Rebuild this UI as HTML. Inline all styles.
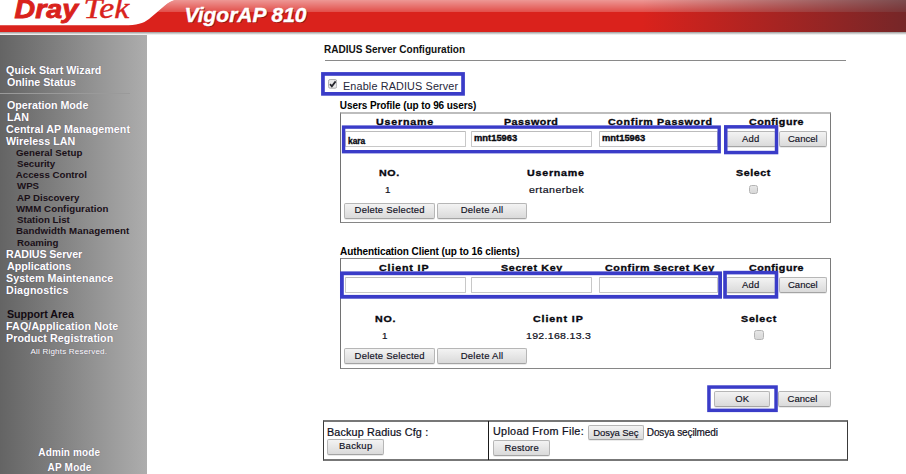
<!DOCTYPE html>
<html>
<head>
<meta charset="utf-8">
<title>Vigor AP 810</title>
<style>
*{margin:0;padding:0;box-sizing:border-box;}
html,body{width:906px;height:474px;overflow:hidden;background:#fff;}
body{position:relative;font-family:"Liberation Sans",sans-serif;font-size:11px;color:#000;}
.abs{position:absolute;white-space:nowrap;line-height:1;}
/* header */
#hdr{position:absolute;left:0;top:0;width:906px;height:36px;}
/* sidebar */
#side{position:absolute;left:0;top:35px;width:147px;height:439px;background:linear-gradient(to right,#646464 0%,#7d7d7d 35%,#9b9b9b 75%,#adadad 100%);}
.m{position:absolute;left:7px;white-space:nowrap;line-height:12px;font-weight:bold;font-size:10.7px;color:#fff;text-shadow:0 0 1px rgba(60,40,90,.55);}
.s{position:absolute;left:17px;white-space:nowrap;line-height:11px;font-weight:bold;font-size:9.7px;color:#1a1018;}
/* content */
.t{position:absolute;white-space:nowrap;line-height:12px;font-size:11px;color:#000;}
.vb{position:absolute;white-space:nowrap;line-height:12px;font-size:9.8px;font-weight:bold;color:#08080f;-webkit-text-stroke:.35px #08080f;}
.v{position:absolute;white-space:nowrap;line-height:12px;font-size:9.8px;color:#0e0e20;-webkit-text-stroke:.2px #0e0e20;}
.box{position:absolute;border:1px solid #868686;border-left-color:#727272;border-right-color:#7a7a7a;background:#fff;}
.blue{position:absolute;border:4px solid #3a3cc6;}
.inp{position:absolute;height:16px;border:1px solid #c8c8c8;border-top-color:#bcbcbc;border-radius:1px;background:#fff;}
.btn{position:absolute;height:16px;border:1px solid #b6b6b6;border-bottom-color:#a4a4a4;border-radius:2px;background:linear-gradient(#f3f3f3,#dadada);font-size:10px;line-height:14px;text-align:center;color:#1a1a2a;white-space:nowrap;box-shadow:0 1px 0 rgba(0,0,0,.08);}
.bt{position:absolute;white-space:nowrap;line-height:12px;font-size:9.5px;color:#10101e;-webkit-text-stroke:.15px #10101e;z-index:3}
.cb{position:absolute;width:10px;height:10px;border:1px solid #b4b4b4;border-radius:2.5px;background:linear-gradient(#e6e6e6,#d8d8d8);}
</style>
</head>
<body>

<!-- HEADER -->
<svg id="hdr" width="906" height="36" viewBox="0 0 906 36">
  <defs>
    <linearGradient id="rg" x1="642" y1="0" x2="906" y2="0" gradientUnits="userSpaceOnUse">
      <stop offset="0" stop-color="#46282d" stop-opacity="0"/>
      <stop offset="1" stop-color="#46282d" stop-opacity=".68"/>
    </linearGradient>
    <linearGradient id="gl" x1="0" y1="0" x2="0" y2="1">
      <stop offset="0" stop-color="#fff" stop-opacity=".56"/>
      <stop offset="1" stop-color="#fff" stop-opacity=".2"/>
    </linearGradient>
    <linearGradient id="sh" x1="0" y1="0" x2="0" y2="1">
      <stop offset="0" stop-color="#9a9a9a"/>
      <stop offset="1" stop-color="#ffffff"/>
    </linearGradient>
  </defs>
  <rect x="0" y="0" width="906" height="36" fill="#fff"/>
  <rect x="0" y="32" width="906" height="3" fill="url(#sh)"/>
  <path d="M0,25.3 L124,25.3 C137,25.3 143,23.5 149,19 L165,5.5 C169,2 173,0 180,-1 L906,-1 L906,32 L0,32 Z" fill="#da221c"/>
  <path d="M180,-1 L906,-1 L906,12 L157.5,12 L165,5.5 C169,2 173,0 180,-1 Z" fill="url(#gl)"/>
  <rect x="640" y="0" width="266" height="32" fill="url(#rg)"/>
  <text x="14.6" y="17.6" font-family="Liberation Sans" font-weight="bold" font-style="italic" font-size="26.5" fill="#d9221c" stroke="#d9221c" stroke-width="0.9" textLength="63.5" lengthAdjust="spacingAndGlyphs">Dray</text>
  <text x="83.6" y="17.8" font-family="Liberation Serif" font-style="italic" font-size="29" fill="#d9221c" stroke="#d9221c" stroke-width="0.45" textLength="45.5" lengthAdjust="spacingAndGlyphs">Tek</text>
  <text x="185.5" y="23" font-family="Liberation Sans" font-weight="bold" font-style="italic" font-size="20" fill="#7d1512" opacity=".75" textLength="122" lengthAdjust="spacingAndGlyphs">VigorAP 810</text>
  <text x="184.5" y="22" font-family="Liberation Sans" font-weight="bold" font-style="italic" font-size="20" fill="#fff" stroke="#fff" stroke-width="0.4" textLength="122" lengthAdjust="spacingAndGlyphs">VigorAP 810</text>
</svg>

<!-- SIDEBAR -->
<div id="side">
<div class="m" style="left:6.1px;top:29px;letter-spacing:0.02px" id="s1">Quick Start Wizard</div>
<div class="m" style="top:41px" id="s2">Online Status</div>
<div style="position:absolute;left:0;top:58px;width:130px;height:1px;background:#9a9a9a"></div>
<div class="m" style="top:64px" id="s3">Operation Mode</div>
<div class="m" style="top:76px" id="s4">LAN</div>
<div class="m" style="left:6.1px;top:88px;letter-spacing:0.08px" id="s5">Central AP Management</div>
<div class="m" style="left:6.1px;top:100px;letter-spacing:0.03px" id="s6">Wireless LAN</div>
<div class="s" style="left:15.9px;top:112px;letter-spacing:0.08px" id="s7">General Setup</div>
<div class="s" style="top:123px" id="s8">Security</div>
<div class="s" style="left:15.8px;top:134px;letter-spacing:0.01px" id="s9">Access Control</div>
<div class="s" style="top:145px" id="s10">WPS</div>
<div class="s" style="top:157px" id="s11">AP Discovery</div>
<div class="s" style="left:15.9px;top:168px;letter-spacing:0.06px" id="s12">WMM Configuration</div>
<div class="s" style="top:179px" id="s13">Station List</div>
<div class="s" style="left:15.9px;top:190px;letter-spacing:0.10px" id="s14">Bandwidth Management</div>
<div class="s" style="top:202px" id="s15">Roaming</div>
<div class="m" style="left:6.0px;top:213px;letter-spacing:-0.09px" id="s16">RADIUS Server</div>
<div class="m" style="top:225px" id="s17">Applications</div>
<div class="m" style="left:6.0px;top:237px;letter-spacing:0.09px" id="s18">System Maintenance</div>
<div class="m" style="left:6.0px;top:249px;letter-spacing:0.18px" id="s19">Diagnostics</div>
<div class="m" style="left:7.0px;top:273px;color:#120a12;text-shadow:none;letter-spacing:-0.04px" id="s20">Support Area</div>
<div class="m" style="left:6.0px;top:285px;letter-spacing:0.13px" id="s21">FAQ/Application Note</div>
<div class="m" style="left:6.0px;top:297px;letter-spacing:0.08px" id="s22">Product Registration</div>
<div class="m" style="left:30.5px;top:311px;font-size:8px;font-weight:normal;letter-spacing:0.21px" id="s23">All Rights Reserved.</div>
<div class="m" style="left:38.3px;top:412px;font-size:10px;letter-spacing:0.13px" id="s24">Admin mode</div>
<div class="m" style="left:47.6px;top:427px;font-size:10px;letter-spacing:0.18px" id="s25">AP Mode</div>
</div>

<!-- CONTENT -->
<div id="main">
<div class="t" style="left:324.2px;top:42.5px;font-weight:bold;font-size:10.8px;color:#111;transform:scaleX(0.9292);transform-origin:0 0" id="title">RADIUS Server Configuration</div>
<div style="position:absolute;left:325px;top:60px;width:521px;height:1px;background:#8a8a8a"></div>

<svg class="abs" style="left:328px;top:79.2px" width="9.2" height="9.7" viewBox="0 0 10 10" preserveAspectRatio="none"><rect x=".5" y=".5" width="9" height="9" rx="1.8" fill="#e9e9e9" stroke="#aaa"/><path d="M2.2,5.2 L4.2,7.5 L8.3,2.4" fill="none" stroke="#26262c" stroke-width="1.9"/></svg>
<div class="v" style="left:342.8px;top:81px;font-size:10px;letter-spacing:0.14px;transform:scaleX(1.0800);transform-origin:0 0;color:#26263a;-webkit-text-stroke:0" id="enable">Enable RADIUS Server</div>

<div class="t" style="left:339.8px;top:100.4px;font-weight:bold;font-size:10px;letter-spacing:-0.08px" id="up">Users Profile (up to 96 users)</div>

<!-- table 1 -->
<div class="box" style="left:340px;top:112px;width:491px;height:111px;border-top:2px solid #bdbdbd"></div>
<div class="vb" style="left:376.0px;top:116px;letter-spacing:0.72px;transform:scaleX(1.0900);transform-origin:0 0" id="h1a">Username</div>
<div class="vb" style="left:504.4px;top:116px;letter-spacing:0.45px;transform:scaleX(1.0900);transform-origin:0 0" id="h1b">Password</div>
<div class="vb" style="left:607.5px;top:116px;letter-spacing:0.59px;transform:scaleX(1.0900);transform-origin:0 0" id="h1c">Confirm Password</div>
<div class="vb" style="left:749.1px;top:116px;letter-spacing:0.47px;transform:scaleX(1.0900);transform-origin:0 0" id="h1d">Configure</div>
<div class="inp" style="left:345px;top:131px;width:121px"></div>
<div class="inp" style="left:471px;top:131px;width:121px"></div>
<div class="inp" style="left:599px;top:131px;width:119px"></div>
<div class="vb" style="left:348.3px;top:135px;font-size:9px;transform:scaleX(0.9306);transform-origin:0 0" id="kara">kara</div>
<div class="vb" style="left:474.1px;top:132px;font-size:9px;transform:scaleX(1.0414);transform-origin:0 0" id="m1">mnt15963</div>
<div class="vb" style="left:602.1px;top:132px;font-size:9px;transform:scaleX(1.0414);transform-origin:0 0" id="m2">mnt15963</div>
<div class="btn" style="left:726px;top:131px;width:50px;height:16px"></div><div class="bt" style="left:742.0px;top:132.9px;letter-spacing:0.18px" id="bAdd1">Add</div>
<div class="btn" style="left:779px;top:131px;width:48px;height:16px"></div><div class="bt" style="left:788.0px;top:132.9px;letter-spacing:0.01px" id="bCan1">Cancel</div>

<div class="vb" style="left:378.6px;top:167px;letter-spacing:0.57px;transform:scaleX(1.0900);transform-origin:0 0" id="no1">NO.</div>
<div class="vb" style="left:527.0px;top:167px;letter-spacing:0.70px;transform:scaleX(1.0900);transform-origin:0 0" id="un2">Username</div>
<div class="vb" style="left:736.3px;top:167px;letter-spacing:0.51px;transform:scaleX(1.0900);transform-origin:0 0" id="sel1">Select</div>
<div class="v" style="left:385px;top:184px" id="one1">1</div>
<div class="v" style="left:529.2px;top:184px;letter-spacing:0.43px;transform:scaleX(1.0800);transform-origin:0 0" id="ert">ertanerbek</div>
<div class="cb" style="left:749px;top:185px;width:9px;height:9px"></div>
<div class="btn" style="left:344px;top:203px;width:91px;height:16px"></div><div class="bt" style="left:354.6px;top:204.2px;letter-spacing:0.21px" id="bDs1">Delete Selected</div>
<div class="btn" style="left:437px;top:203px;width:90px;height:16px"></div><div class="bt" style="left:460.7px;top:204.2px;letter-spacing:0.26px" id="bDa1">Delete All</div>

<div class="t" style="left:340.0px;top:246px;font-weight:bold;font-size:10px;letter-spacing:-0.08px" id="ac">Authentication Client (up to 16 clients)</div>

<!-- table 2 -->
<div class="box" style="left:340px;top:258px;width:491px;height:111px"></div>
<div class="vb" style="left:379.3px;top:262px;letter-spacing:0.78px;transform:scaleX(1.0900);transform-origin:0 0" id="h2a">Client IP</div>
<div class="vb" style="left:500.9px;top:262px;letter-spacing:0.62px;transform:scaleX(1.0900);transform-origin:0 0" id="h2b">Secret Key</div>
<div class="vb" style="left:605.1px;top:262px;letter-spacing:0.54px;transform:scaleX(1.0900);transform-origin:0 0" id="h2c">Confirm Secret Key</div>
<div class="vb" style="left:749.1px;top:262px;letter-spacing:0.47px;transform:scaleX(1.0900);transform-origin:0 0" id="h2d">Configure</div>
<div class="inp" style="left:345px;top:277px;width:121px"></div>
<div class="inp" style="left:471px;top:277px;width:121px"></div>
<div class="inp" style="left:599px;top:277px;width:119px"></div>
<div class="btn" style="left:726px;top:277px;width:50px;height:16px"></div><div class="bt" style="left:742.0px;top:278.8px;letter-spacing:0.18px" id="bAdd2">Add</div>
<div class="btn" style="left:779px;top:277px;width:48px;height:16px"></div><div class="bt" style="left:788.0px;top:278.8px;letter-spacing:0.01px" id="bCan2">Cancel</div>

<div class="vb" style="left:375.4px;top:312.5px;letter-spacing:0.67px;transform:scaleX(1.0900);transform-origin:0 0" id="no2">NO.</div>
<div class="vb" style="left:532.9px;top:312.5px;letter-spacing:0.81px;transform:scaleX(1.0900);transform-origin:0 0" id="cip2">Client IP</div>
<div class="vb" style="left:741.3px;top:312.5px;letter-spacing:0.71px;transform:scaleX(1.0900);transform-origin:0 0" id="sel2">Select</div>
<div class="v" style="left:382px;top:329.5px" id="one2">1</div>
<div class="v" style="left:525.8px;top:329.5px;letter-spacing:0.27px;transform:scaleX(1.0800);transform-origin:0 0" id="ip">192.168.13.3</div>
<div class="cb" style="left:754px;top:330px"></div>
<div class="btn" style="left:344px;top:348px;width:91px;height:16px"></div><div class="bt" style="left:354.6px;top:350.4px;letter-spacing:0.21px" id="bDs2">Delete Selected</div>
<div class="btn" style="left:437px;top:348px;width:90px;height:16px"></div><div class="bt" style="left:460.7px;top:350.4px;letter-spacing:0.26px" id="bDa2">Delete All</div>

<div class="btn" style="left:714px;top:391px;width:56px;height:16px"></div><div class="bt" style="left:735.2px;top:393.1px;letter-spacing:0.15px" id="bOk">OK</div>
<div class="btn" style="left:778px;top:391px;width:53px;height:16px"></div><div class="bt" style="left:787.6px;top:393.1px;letter-spacing:0.03px" id="bCan3">Cancel</div>

<svg style="position:absolute;left:0;top:0;z-index:5" width="906" height="474" viewBox="0 0 906 474" fill="none" stroke="#3a3cc8">
<rect x="322.95" y="73.95" width="140.10" height="19.90" stroke-width="3.7"/>
<rect x="343.60" y="127.10" width="375.60" height="24.60" stroke-width="3.4"/>
<rect x="725.75" y="126.85" width="50.80" height="25.70" stroke-width="3.5"/>
<rect x="341.90" y="273.30" width="378.20" height="23.50" stroke-width="3.8"/>
<rect x="725.00" y="272.60" width="51.50" height="24.30" stroke-width="3.6"/>
<rect x="708.95" y="387.05" width="67.10" height="23.30" stroke-width="3.5"/>
</svg>
<!-- bottom table -->
<div style="position:absolute;left:323px;top:420px;width:525px;height:41px;border:1px solid #3a3a3a;border-top:2px solid #777;border-bottom:2px solid #777"></div>
<div style="position:absolute;left:488px;top:421px;width:1px;height:39px;background:#1a1a1a"></div>
<div class="v" style="left:326.8px;top:427px;font-size:10px;letter-spacing:0.14px;transform:scaleX(1.0800);transform-origin:0 0" id="brc">Backup Radius Cfg :</div>
<div class="btn" style="left:327px;top:439px;width:57px;height:15.5px"></div><div class="bt" style="left:338.9px;top:440.4px;letter-spacing:0.32px" id="bBk">Backup</div>
<div class="v" style="left:493.4px;top:426px;font-size:10px;letter-spacing:0.28px;transform:scaleX(1.0800);transform-origin:0 0" id="uff">Upload From File:</div>
<div class="btn" style="left:588px;top:425px;width:56px;height:15px"></div><div class="bt" style="left:593.3px;top:427.2px;letter-spacing:-0.10px" id="bDs">Dosya Seç</div>
<div class="v" style="left:646.8px;top:427px;font-size:10px;letter-spacing:-0.12px" id="dsm">Dosya seçilmedi</div>
<div class="btn" style="left:493px;top:440px;width:57px;height:15.5px"></div><div class="bt" style="left:504.4px;top:441.8px;letter-spacing:0.18px" id="bRs">Restore</div>
</div>

</body>
</html>
